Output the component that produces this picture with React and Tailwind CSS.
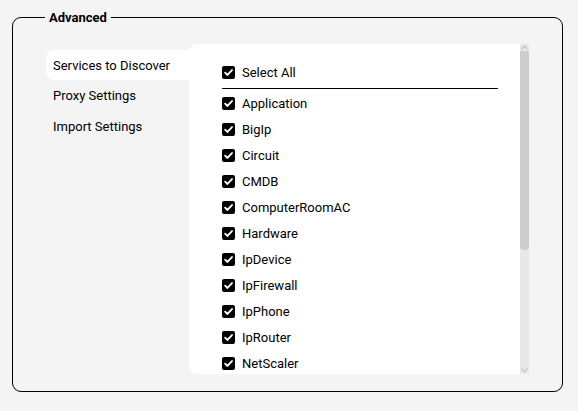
import React from "react";

const items = [
  "Application",
  "BigIp",
  "Circuit",
  "CMDB",
  "ComputerRoomAC",
  "Hardware",
  "IpDevice",
  "IpFirewall",
  "IpPhone",
  "IpRouter",
  "NetScaler",
];

function Check() {
  return (
    <span className="flex h-[13px] w-[13px] shrink-0 items-center justify-center rounded-[2px] bg-black">
      <svg width="11" height="11" viewBox="0 0 12 12">
        <path d="M2.3 6.2 L4.9 8.7 L9.8 3.3" fill="none" stroke="white" strokeWidth="2" strokeLinecap="round" strokeLinejoin="round" />
      </svg>
    </span>
  );
}

function Row({ label }) {
  return (
    <div className="flex h-[26px] shrink-0 items-center gap-[7px]">
      <Check />
      <span className="text-[13px] leading-none text-black">{label}</span>
    </div>
  );
}

export default function App() {
  return (
    <div
      className="h-[411px] w-[578px] bg-[#f4f4f4] pl-[12px] pt-[10px]"
      style={{ fontFamily: "Roboto, 'Liberation Sans', sans-serif" }}
    >
      <fieldset className="m-0 h-[382px] w-[551px] rounded-[9px] border border-black p-0">
        <legend className="ml-[32px] px-[4px] text-[13px] font-bold leading-[15px] text-black">
          Advanced
        </legend>
        <div className="flex pl-[33px] pt-[19px]">
          <div className="flex w-[143px] flex-col pt-[6px]">
            <div className="flex h-[30px] items-center rounded-l-[8px] bg-white pl-[7px] pt-[2px] text-[13px] text-black">
              Services to Discover
            </div>
            <div className="flex h-[31px] items-center pl-[7px] text-[13px] text-black">
              Proxy Settings
            </div>
            <div className="flex h-[31px] items-center pl-[7px] text-[13px] text-black">
              Import Settings
            </div>
          </div>
          <div className="flex h-[330px] w-[340px] overflow-hidden rounded-l-[8px] bg-white">
            <div className="flex flex-1 flex-col overflow-hidden pl-[33px] pr-[22px] pt-[15px]">
              <Row label="Select All" />
              <div className="mt-[3px] h-px shrink-0 bg-black" />
              <div className="mt-px flex flex-col">
                {items.map((it) => (
                  <Row key={it} label={it} />
                ))}
              </div>
            </div>
            <div className="flex w-[9px] shrink-0 flex-col bg-[#e8e8e8]">
              <div className="flex h-[7px] shrink-0 items-center justify-center">
                <svg width="7" height="5" viewBox="0 0 7 5">
                  <path d="M0.5 4.5 L3.5 1 L6.5 4.5" fill="none" stroke="#c4c4c4" strokeWidth="1.2" />
                </svg>
              </div>
              <div className="h-[199px] shrink-0 rounded-b-[4px] bg-[#cdcdcd]" />
              <div className="flex-1" />
              <div className="flex h-[7px] shrink-0 items-center justify-center">
                <svg width="7" height="5" viewBox="0 0 7 5">
                  <path d="M0.5 0.5 L3.5 4 L6.5 0.5" fill="none" stroke="#c4c4c4" strokeWidth="1.2" />
                </svg>
              </div>
            </div>
          </div>
        </div>
      </fieldset>
    </div>
  );
}
